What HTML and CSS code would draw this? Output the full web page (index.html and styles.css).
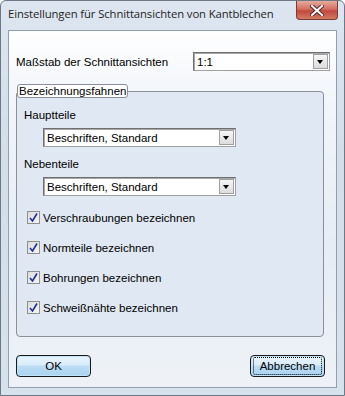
FILE: index.html
```html
<!DOCTYPE html>
<html lang="de">
  <head>
    <meta charset="UTF-8" />
    <title>Einstellungen für Schnittansichten von Kantblechen</title>
    <link rel="stylesheet" href="styles.css">
  </head>
  <body>
    <div class="window">
      <!-- Titelleiste -->
      <div class="titlebar">
        <span class="title">Einstellungen für Schnittansichten von Kantblechen</span>
        <div class="close-btn">
          <svg width="14" height="11" viewBox="0 0 14 11">
            <path d="M2 1 L12 10 M12 1 L2 10" stroke="#5a2a2a" stroke-width="4" stroke-linecap="square"/>
            <path d="M2 1 L12 10 M12 1 L2 10" stroke="#ffffff" stroke-width="2" stroke-linecap="square"/>
          </svg>
        </div>
      </div>

      <!-- Inhalt -->
      <div class="client">
        <div class="row-scale">
          <span class="label">Maßstab der Schnittansichten</span>
          <div class="combo combo-scale">
            <span class="combo-text">1:1</span>
            <span class="combo-arrow"></span>
          </div>
        </div>

        <fieldset class="group">
          <legend class="group-title">Bezeichnungsfahnen</legend>

          <div class="label sub-label">Hauptteile</div>
          <div class="combo combo-wide">
            <span class="combo-text">Beschriften, Standard</span>
            <span class="combo-arrow"></span>
          </div>

          <div class="label sub-label second">Nebenteile</div>
          <div class="combo combo-wide">
            <span class="combo-text">Beschriften, Standard</span>
            <span class="combo-arrow"></span>
          </div>

          <div class="checks">
            <label class="check"><span class="box"><svg width="9" height="9" viewBox="0 0 9 9"><path d="M1 5 L3.5 8 L8 0.5" fill="none" stroke="#1b2f9c" stroke-width="1.6"/></svg></span>Verschraubungen bezeichnen</label>
            <label class="check"><span class="box"><svg width="9" height="9" viewBox="0 0 9 9"><path d="M1 5 L3.5 8 L8 0.5" fill="none" stroke="#1b2f9c" stroke-width="1.6"/></svg></span>Normteile bezeichnen</label>
            <label class="check"><span class="box"><svg width="9" height="9" viewBox="0 0 9 9"><path d="M1 5 L3.5 8 L8 0.5" fill="none" stroke="#1b2f9c" stroke-width="1.6"/></svg></span>Bohrungen bezeichnen</label>
            <label class="check"><span class="box"><svg width="9" height="9" viewBox="0 0 9 9"><path d="M1 5 L3.5 8 L8 0.5" fill="none" stroke="#1b2f9c" stroke-width="1.6"/></svg></span>Schweißnähte bezeichnen</label>
          </div>
        </fieldset>

        <div class="buttons">
          <button class="btn">OK</button>
          <button class="btn focused"><span>Abbrechen</span></button>
        </div>
      </div>
    </div>
  </body>
</html>
```

FILE: styles.css
```css
/* Grundlayout */
body {
  margin: 0;
  background: #ffffff;
  font-family: "Liberation Sans", Arial, sans-serif;
}

.window {
  width: 345px;
  height: 396px;
  box-sizing: border-box;
  border: 1px solid #6d7886;
  border-radius: 6px 6px 0 0;
  background: linear-gradient(#dde6f0, #d3dee9 40%, #d8e2ec);
  display: flex;
  flex-direction: column;
}

/* Titelleiste */
.titlebar {
  height: 29px;
  display: flex;
  align-items: flex-start;
  padding-left: 7px;
}

.title {
  font-family: "Open Sans", sans-serif;
  font-size: 11.3px;
  color: #1e1e1e;
  margin-top: 5px;
  letter-spacing: -0.1px;
}

.close-btn {
  margin-left: auto;
  margin-right: 6px;
  width: 40px;
  height: 18px;
  border: 1px solid #7a3a36;
  border-top: none;
  border-radius: 0 0 4px 4px;
  background: linear-gradient(#e6ab9c, #d46f62 45%, #c2493e 55%, #d27a64);
  display: flex;
  align-items: center;
  justify-content: center;
}

/* Innerer Bereich */
.client {
  flex: 1;
  margin: 0 7px 7px 7px;
  border: 1px solid #8fa0b4;
  background: linear-gradient(#ffffff, #f4f7fb 15%, #e6edf5 60%, #eef2f7);
  padding: 0 7px;
  display: flex;
  flex-direction: column;
}

.label {
  font-size: 11.5px;
  color: #000000;
}

.row-scale {
  display: flex;
  align-items: center;
  justify-content: space-between;
  margin-top: 21px;
}

/* Kombinationsfeld */
.combo {
  height: 19px;
  box-sizing: border-box;
  border: 1px solid #a0a0a0;
  border-top-color: #6f6f6f;
  border-left-color: #6f6f6f;
  box-shadow: inset 1px 1px 0 #a8a8a8;
  background: #ffffff;
  display: flex;
  align-items: center;
  padding-left: 3px;
}

.combo-scale {
  width: 137px;
  margin-right: -1px;
}

.combo-wide {
  width: 193px;
  margin-left: 19px;
}

.combo-text {
  font-size: 11.5px;
  flex: 1;
}

.combo-arrow {
  width: 15px;
  height: 15px;
  margin-right: 1px;
  box-sizing: border-box;
  border: 1px solid #a0a0a0;
  background: linear-gradient(#f6f6f6, #dcdcdc);
  position: relative;
}

.combo-arrow::after {
  content: "";
  position: absolute;
  left: 3px;
  top: 5px;
  border-left: 3.5px solid transparent;
  border-right: 3.5px solid transparent;
  border-top: 4px solid #000000;
}

/* Gruppenrahmen */
.group {
  margin: 13px 5px 0 0;
  padding: 11px 8px 0 7px;
  height: 253px;
  box-sizing: border-box;
  border: 1px solid #8a8f99;
  border-radius: 4px;
  background: #dfe8f3;
}

.group-title {
  font-size: 11.5px;
  padding: 0 1px;
  margin-left: -7px;
  border: 1px solid #8a8f99;
  border-radius: 3px;
  background: #ffffff;
  line-height: 12px;
}

.sub-label {
  margin-bottom: 7px;
}

.second {
  margin-top: 11px;
}

/* Kontrollkästchen */
.checks {
  margin-top: 15px;
  margin-left: 3px;
  display: flex;
  flex-direction: column;
  gap: 17px;
}

.check {
  display: flex;
  align-items: center;
  font-size: 11.5px;
  height: 13px;
}

.box {
  width: 13px;
  height: 13px;
  box-sizing: border-box;
  border: 1px solid #8e8f8f;
  background: linear-gradient(135deg, #dcdcdc, #f4f4f4);
  margin-right: 3px;
  display: flex;
  align-items: center;
  justify-content: center;
}

/* Schaltflächen */
.buttons {
  display: flex;
  justify-content: space-between;
  margin-top: 18px;
  padding-right: 4px;
}

.btn {
  width: 75px;
  height: 22px;
  border: 1px solid #1a1a1a;
  border-radius: 4px;
  background: linear-gradient(#eaf4fc, #d9ecfa 45%, #bcdcf4 50%, #a9d3f0);
  font-family: "Liberation Sans", Arial, sans-serif;
  font-size: 11.5px;
  color: #000000;
  padding: 0;
  box-shadow: inset 0 0 0 1px #bfe3fb;
}

.btn.focused span {
  display: inline-block;
  width: 67px;
  height: 16px;
  line-height: 16px;
  border: 1px dotted #000000;
  border-radius: 2px;
}
```
